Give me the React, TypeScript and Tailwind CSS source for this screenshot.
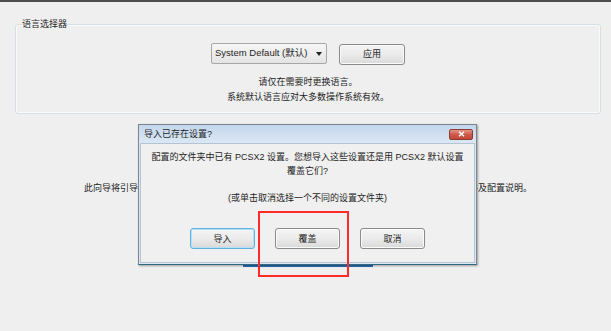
import React from 'react'

const FONT = { fontFamily: '"Liberation Sans", "Noto Sans CJK SC", sans-serif' }

function WinButton({ label, focused = false, className = '' }: { label: string; focused?: boolean; className?: string }) {
  return (
    <div
      className={`flex h-[21px] w-[65px] items-center justify-center rounded-[3px] border bg-gradient-to-b from-[#f4f4f4] via-[#ebebeb] to-[#d9d9d9] text-[9px] text-[#1e1e1e] ${
        focused ? 'border-[#5fb2e0] shadow-[inset_0_0_0_1px_#b6e0f6]' : 'border-[#8a8a8a] shadow-[inset_0_0_0_1px_#fbfbfb]'
      } ${className}`}
    >
      {label}
    </div>
  )
}

export default function App() {
  return (
    <div className="relative h-[331px] w-[611px] overflow-hidden bg-[#efefef] text-[#1e1e1e]" style={FONT}>
      <div className="h-[2px] bg-[#4e4e4e]" />

      {/* Language group box */}
      <fieldset className="mt-[16px] ml-[15px] mr-[10px] rounded-[3px] border border-[#d5dfe5] pl-[6px] pb-[8px] shadow-[inset_0_0_0_1px_#fafafa]">
        <legend className="text-[9px] leading-[12px] text-[#1e1e1e]">语言选择器</legend>
        <div className="mt-[12px] flex items-center justify-center gap-[12px] pr-[6px]">
          <div className="flex h-[21px] w-[116px] items-center justify-between rounded-[2px] border border-[#a7a7a7] bg-gradient-to-b from-[#f6f6f6] to-[#e4e4e4] pl-[3px] pr-[4px] text-[9.5px]">
            <span>System Default (默认)</span>
            <svg width="6" height="4" viewBox="0 0 6 4">
              <path d="M0 0 L6 0 L3 4 Z" fill="#222" />
            </svg>
          </div>
          <WinButton label="应用" className="mt-[2px] w-[66px]" />
        </div>
        <div className="mt-[10px] pr-[6px] text-center text-[9px] leading-[15px]">
          <p>请仅在需要时更换语言。</p>
          <p>系统默认语言应对大多数操作系统有效。</p>
        </div>
      </fieldset>

      {/* Wizard text, mostly hidden behind the dialog */}
      <p className="mt-[67px] pl-[84px] text-[9px] leading-[15px] whitespace-nowrap">
        此向导将引导您完成插件、存储卡以及 BIOS 的配置。首次安装 PCSX2 时，建议您先阅读自述文件及配置说明。
      </p>
      <div className="mt-[69px] ml-[243px] h-[2px] w-[130px] bg-[#2f6fb3]" />

      {/* Modal dialog */}
      <div className="absolute left-[138px] top-[124px] flex h-[141px] w-[339px] flex-col border border-[#7b858f] border-b-[#2f6882] bg-[#dde8f4] shadow-[1px_1px_2px_rgba(0,0,0,0.35)]">
        <div className="flex h-[18px] items-center justify-between bg-gradient-to-b from-[#c3d7ec] to-[#dbe7f4] pl-[5px] pr-[3px]">
          <span className="text-[9px] leading-[12px]">导入已存在设置?</span>
          <div className="flex h-[11px] w-[24px] items-center justify-center rounded-[2px] border border-[#8c3a34] bg-gradient-to-b from-[#e4958a] via-[#cf5a4a] to-[#c24636]">
            <svg width="7" height="6" viewBox="0 0 7 6">
              <path d="M1 0.8 L6 5.2 M6 0.8 L1 5.2" stroke="#fff" strokeWidth="1.5" />
            </svg>
          </div>
        </div>
        <div className="mx-[1px] mb-[1px] flex flex-1 flex-col items-center border border-[#b5c4d4] bg-[#f0f0f0] pt-[6px] text-[9px] leading-[14px]">
          <p>配置的文件夹中已有 PCSX2 设置。您想导入这些设置还是用 PCSX2 默认设置</p>
          <p>覆盖它们?</p>
          <p className="mt-[13px]">(或单击取消选择一个不同的设置文件夹)</p>
          <div className="mt-[23px] flex gap-[20px]">
            <WinButton label="导入" focused />
            <WinButton label="覆盖" />
            <WinButton label="取消" />
          </div>
        </div>
      </div>

      {/* Red annotation box */}
      <div className="absolute left-[258px] top-[211px] h-[66px] w-[91px] border-2 border-[#ff2b2b]" />
    </div>
  )
}
